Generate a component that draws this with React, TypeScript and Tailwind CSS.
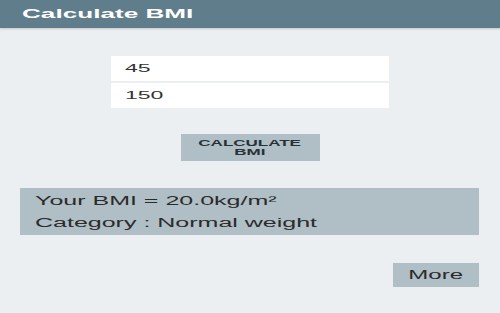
import React from "react";

const font = { fontFamily: '"Liberation Sans", Arial, sans-serif' };

function Stretch({ children, className = "" }: { children: React.ReactNode; className?: string }) {
  // the screenshot is stretched ~2x horizontally, so is its text
  return <span className={`inline-block scale-x-[2] ${className}`}>{children}</span>;
}

function Field({ value }: { value: string }) {
  return (
    <div className="flex h-[25px] items-center bg-white pl-[14px] text-[11.5px] text-[#333]">
      <Stretch className="origin-left">{value}</Stretch>
    </div>
  );
}

export default function App() {
  return (
    <div className="flex h-[313px] w-[500px] flex-col overflow-hidden bg-[#eceff1]" style={font}>
      <header className="flex h-[28px] shrink-0 items-center bg-[#607d8b] pl-[22px] shadow-[0_1px_2px_rgba(0,0,0,0.18)]">
        <span className="inline-block origin-left scale-x-[2.09] text-[12.5px] font-bold text-white">Calculate BMI</span>
      </header>

      <div className="ml-[111px] mt-[28px] flex w-[278px] flex-col gap-[2px]">
        <Field value="45" />
        <Field value="150" />
      </div>

      <button
        type="button"
        className="mx-auto mt-[26px] flex h-[27px] w-[139px] flex-col items-center justify-center bg-[#b0bec5] pt-[1px] text-[8.5px] font-bold leading-[9.5px] text-[#263238]"
      >
        <Stretch className="origin-center">CALCULATE</Stretch>
        <Stretch className="origin-center">BMI</Stretch>
      </button>

      <div className="ml-[20px] mt-[27px] flex h-[47px] w-[459px] flex-col justify-center bg-[#b0bec5] pl-[15px] text-[12.5px] leading-[22px] text-[#2b2b2b]">
        <div>
          <Stretch className="origin-left">Your BMI = 20.0kg/m²</Stretch>
        </div>
        <div>
          <Stretch className="origin-left">Category : Normal weight</Stretch>
        </div>
      </div>

      <div className="mr-[21px] mt-[28px] flex justify-end">
        <button type="button" className="flex h-[24px] w-[86px] items-center justify-center bg-[#b0bec5] text-[12px] text-[#2b2b2b]">
          <Stretch className="origin-center">More</Stretch>
        </button>
      </div>
    </div>
  );
}
